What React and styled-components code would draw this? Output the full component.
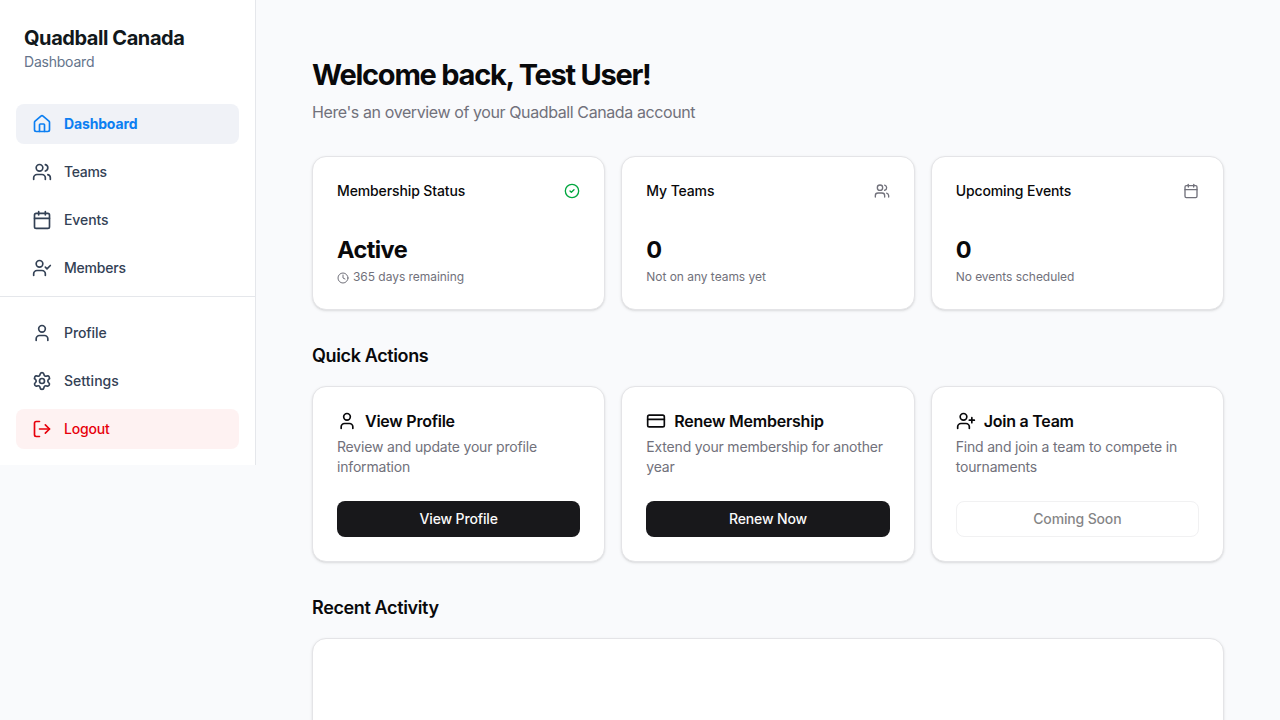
import React from 'react';
import styled, { createGlobalStyle } from 'styled-components';
import { House, Users, Calendar, UserCheck, User, Settings, LogOut, CircleCheck, Clock, CreditCard, UserPlus } from 'lucide-react';

const GlobalStyle = createGlobalStyle`
  *, *::before, *::after { box-sizing: border-box; }
  html, body { margin: 0; height: 100%; overflow: hidden; }
  body {
    background: #f9fafc;
    color: #09090b;
    font-family: Inter, "Liberation Sans", sans-serif;
    -webkit-font-smoothing: antialiased;
  }
  h1, h2, h3, p { margin: 0; }
  svg { flex-shrink: 0; display: block; }
`;

const Page = styled.div`
  display: flex;
  align-items: flex-start;
  height: 720px;
  overflow: hidden;
`;

const Sidebar = styled.aside`
  width: 256px;
  flex-shrink: 0;
  background: #fff;
  border-right: 1px solid #e5e7eb;
`;

const Brand = styled.header`
  padding: 24px 24px 16px;
`;

const BrandName = styled.h1`
  font-size: 20px;
  line-height: 28px;
  font-weight: 700;
  letter-spacing: -0.43px;
  color: #11181c;
`;

const BrandSub = styled.p`
  font-size: 14px;
  line-height: 20px;
  letter-spacing: -0.22px;
  color: #64748b;
`;

const Nav = styled.nav`
  display: flex;
  flex-direction: column;
  gap: 8px;
  padding: ${(p) => (p.$footer ? '16px' : '16px 16px 8px')};
  border-top: ${(p) => (p.$footer ? '1px solid #e5e7eb' : 'none')};
`;

const tones = {
  normal: { color: '#334155', background: 'transparent' },
  active: { color: '#0c7ff2', background: '#f0f2f7' },
  danger: { color: '#e7000b', background: '#fef2f2' },
};

const NavItem = styled.a`
  display: flex;
  align-items: center;
  gap: 12px;
  height: 40px;
  padding: 0 16px;
  border-radius: 8px;
  font-size: 14px;
  line-height: 20px;
  font-weight: ${(p) => (p.$tone === 'active' ? 700 : 500)};
  letter-spacing: ${(p) => p.$track}px;
  color: ${(p) => tones[p.$tone].color};
  background: ${(p) => tones[p.$tone].background};
`;

const Main = styled.main`
  flex: 1;
  min-width: 0;
  padding: 56px;
`;

const PageTitle = styled.h1`
  font-size: 29px;
  line-height: 38px;
  font-weight: 700;
  letter-spacing: -1.25px;
`;

const PageSub = styled.p`
  margin-top: 6px;
  font-size: 16px;
  line-height: 24px;
  letter-spacing: -0.4px;
  color: #71717b;
`;

const CardGrid = styled.div`
  display: grid;
  grid-template-columns: repeat(3, minmax(0, 1fr));
  gap: 16px;
`;

const StatGrid = styled(CardGrid)`
  margin-top: 32px;
`;

const Section = styled.section`
  margin-top: 32px;
`;

const SectionTitle = styled.h2`
  margin-bottom: 16px;
  font-size: 18px;
  line-height: 28px;
  font-weight: 600;
  letter-spacing: -0.37px;
`;

const Card = styled.article`
  padding: 24px;
  border: 1px solid #e4e4e7;
  border-radius: 14px;
  background: #fff;
  box-shadow: 0 1px 3px rgba(0, 0, 0, 0.1), 0 1px 2px -1px rgba(0, 0, 0, 0.1);
`;

const ActivityCard = styled(Card)`
  height: 200px;
`;

const StatHeader = styled.div`
  display: flex;
  align-items: center;
  justify-content: space-between;
  height: 20px;
  margin-bottom: 33px;
  color: ${(p) => p.$iconColor};
`;

const StatTitle = styled.h3`
  font-size: 14px;
  line-height: 20px;
  font-weight: 500;
  letter-spacing: -0.12px;
  color: #09090b;
`;

const StatValue = styled.div`
  font-size: 23.5px;
  line-height: 32px;
  font-weight: 700;
  letter-spacing: -0.55px;
`;

const StatNote = styled.p`
  display: flex;
  align-items: center;
  gap: 4px;
  margin-top: 3px;
  font-size: 12px;
  line-height: 16px;
  letter-spacing: -0.04px;
  color: #71717b;

  svg { position: relative; top: 1px; }
`;

const ActionTitle = styled.h3`
  display: flex;
  align-items: center;
  gap: 8px;
  height: 20px;
  font-size: 16px;
  line-height: 20px;
  font-weight: 600;
  letter-spacing: -0.24px;
`;

const ActionText = styled.p`
  margin: 6px 0 24px;
  font-size: 14px;
  line-height: 20px;
  letter-spacing: -0.18px;
  color: #71717b;
`;

const Button = styled.button`
  display: flex;
  align-items: center;
  justify-content: center;
  width: 100%;
  height: 36px;
  padding: 0;
  border: ${(p) => (p.disabled ? '1px solid #e4e4e7' : '0')};
  border-radius: 8px;
  background: ${(p) => (p.disabled ? '#fff' : '#18181b')};
  color: ${(p) => (p.disabled ? '#09090b' : '#fafafa')};
  opacity: ${(p) => (p.disabled ? 0.5 : 1)};
  font: 500 14px/20px Inter, "Liberation Sans", sans-serif;
  letter-spacing: -0.15px;
`;

const mainLinks = [
  { label: 'Dashboard', icon: House, tone: 'active', track: -0.15 },
  { label: 'Teams', icon: Users, tone: 'normal', track: -0.3 },
  { label: 'Events', icon: Calendar, tone: 'normal', track: -0.1 },
  { label: 'Members', icon: UserCheck, tone: 'normal', track: -0.2 },
];

const accountLinks = [
  { label: 'Profile', icon: User, tone: 'normal', track: -0.08 },
  { label: 'Settings', icon: Settings, tone: 'normal', track: 0.04 },
  { label: 'Logout', icon: LogOut, tone: 'danger', track: -0.2 },
];

const stats = [
  { title: 'Membership Status', icon: CircleCheck, color: '#00a63e', value: 'Active', note: '365 days remaining', noteIcon: Clock },
  { title: 'My Teams', icon: Users, color: '#71717b', value: '0', note: 'Not on any teams yet' },
  { title: 'Upcoming Events', icon: Calendar, color: '#71717b', value: '0', note: 'No events scheduled' },
];

const actions = [
  { title: 'View Profile', icon: User, text: 'Review and update your profile information', button: 'View Profile' },
  { title: 'Renew Membership', icon: CreditCard, text: 'Extend your membership for another year', button: 'Renew Now' },
  { title: 'Join a Team', icon: UserPlus, text: 'Find and join a team to compete in tournaments', button: 'Coming Soon', disabled: true },
];

const NavLinks = ({ links, footer }) => (
  <Nav $footer={footer}>
    {links.map(({ label, icon: Icon, tone, track }) => (
      <NavItem key={label} $tone={tone} $track={track}>
        <Icon size={20} />
        <span>{label}</span>
      </NavItem>
    ))}
  </Nav>
);

export default function App() {
  return (
    <Page>
      <GlobalStyle />
      <Sidebar>
        <Brand>
          <BrandName>Quadball Canada</BrandName>
          <BrandSub>Dashboard</BrandSub>
        </Brand>
        <NavLinks links={mainLinks} />
        <NavLinks links={accountLinks} footer />
      </Sidebar>
      <Main>
        <PageTitle>Welcome back, Test User!</PageTitle>
        <PageSub>Here's an overview of your Quadball Canada account</PageSub>
        <StatGrid>
          {stats.map(({ title, icon: Icon, color, value, note, noteIcon: NoteIcon }) => (
            <Card key={title}>
              <StatHeader $iconColor={color}>
                <StatTitle>{title}</StatTitle>
                <Icon size={16} />
              </StatHeader>
              <StatValue>{value}</StatValue>
              <StatNote>
                {NoteIcon && <NoteIcon size={12} />}
                <span>{note}</span>
              </StatNote>
            </Card>
          ))}
        </StatGrid>
        <Section>
          <SectionTitle>Quick Actions</SectionTitle>
          <CardGrid>
            {actions.map(({ title, icon: Icon, text, button, disabled }) => (
              <Card key={title}>
                <ActionTitle>
                  <Icon size={20} />
                  <span>{title}</span>
                </ActionTitle>
                <ActionText>{text}</ActionText>
                <Button disabled={disabled}>{button}</Button>
              </Card>
            ))}
          </CardGrid>
        </Section>
        <Section>
          <SectionTitle>Recent Activity</SectionTitle>
          <ActivityCard />
        </Section>
      </Main>
    </Page>
  );
}
